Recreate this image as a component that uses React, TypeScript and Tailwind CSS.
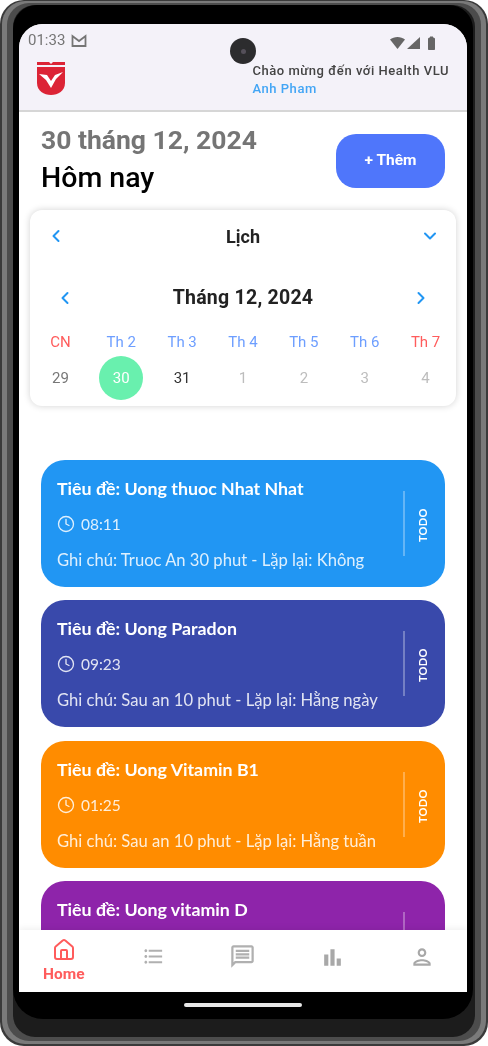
import { ChevronDown, ChevronLeft, ChevronRight, Clock, House } from "lucide-react";
import { MdBarChart, MdFormatListBulleted, MdOutlineMessage, MdOutlinePerson } from "react-icons/md";

const weekDays = [
  { label: "CN", color: "text-[#ff5c5c]" },
  { label: "Th 2", color: "text-[#6d9eff]" },
  { label: "Th 3", color: "text-[#6d9eff]" },
  { label: "Th 4", color: "text-[#6d9eff]" },
  { label: "Th 5", color: "text-[#6d9eff]" },
  { label: "Th 6", color: "text-[#6d9eff]" },
  { label: "Th 7", color: "text-[#ff5c5c]" },
];

const days = [
  { label: "29", color: "text-[#777777]" },
  { label: "30", color: "text-white", selected: true },
  { label: "31", color: "text-[#333333]" },
  { label: "1", color: "text-[#bdbdbd]" },
  { label: "2", color: "text-[#bdbdbd]" },
  { label: "3", color: "text-[#bdbdbd]" },
  { label: "4", color: "text-[#bdbdbd]" },
];

type Task = { title: string; time?: string; note?: string; color: string };

// the last card is cut by the bottom bar, only its title shows
const tasks: Task[] = [
  { title: "Uong thuoc Nhat Nhat", time: "08:11", note: "Ghi chú: Truoc An 30 phut - Lặp lại: Không", color: "bg-[#2196f3]" },
  { title: "Uong Paradon", time: "09:23", note: "Ghi chú: Sau an 10 phut - Lặp lại: Hằng ngày", color: "bg-[#3949ab]" },
  { title: "Uong Vitamin B1", time: "01:25", note: "Ghi chú: Sau an 10 phut - Lặp lại: Hằng tuần", color: "bg-[#ff8c00]" },
  { title: "Uong vitamin D", color: "bg-[#8e24aa]" },
];

function Logo() {
  return (
    <svg width="30" height="34" viewBox="0 0 30 34">
      <path d="M1 0H13L15 2L17 0H29V3H1Z" fill="#dc2436" />
      <path d="M1 5H29V21C29 29 22 33 15 33C8 33 1 29 1 21Z" fill="#dc2436" />
      <path d="M3 12L11 13L15 19L19 13L27 10L20 17L15 26L10 18Z" fill="#ffffff" />
    </svg>
  );
}

function GmailIcon() {
  return (
    <svg width="16" height="13" viewBox="0 0 16 13" fill="none" stroke="#757575" strokeWidth="1.8">
      <path d="M1.5 12V2L8 7L14.5 2V12Z" />
    </svg>
  );
}

function StatusIcons() {
  return (
    <svg width="48" height="14" viewBox="0 0 48 14" fill="#666666">
      <path d="M0 3.5C4 0 11 0 15 3.5L7.5 13Z" />
      <path d="M30 1V13H17Z" />
      <path d="M38 3C38 2 39 1.5 40 1.5V0.5H43V1.5C44 1.5 45 2 45 3V13C45 13.6 44.6 14 44 14H39C38.4 14 38 13.6 38 13Z" />
    </svg>
  );
}

function TaskCard({ title, time, note, color }: Task) {
  return (
    <div className={`flex h-[127px] shrink-0 rounded-[24px] pl-[16px] ${color} font-['Lato',sans-serif] text-white`}>
      <div className="flex min-w-0 flex-1 flex-col pt-[18px]">
        <div className="text-[17.8px] leading-[21px] font-bold whitespace-nowrap">Tiêu đề: {title}</div>
        {time && (
          <div className="mt-[15px] flex items-center gap-[6px] text-white/85">
            <Clock size={18} strokeWidth={1.8} />
            <span className="text-[15.5px] leading-[20px]">{time}</span>
          </div>
        )}
        {note && <div className="mt-[16px] text-[16.6px] leading-[20px] whitespace-nowrap text-white/85">{note}</div>}
      </div>
      <div className="mt-[31px] h-[65px] w-[2px] bg-white/30" />
      <div className="flex w-[40px] items-center justify-center pt-[3px] pr-[4px]">
        <span className="rotate-[-90deg] text-[11px] font-bold tracking-[0.3px]">TODO</span>
      </div>
    </div>
  );
}

export default function App() {
  return (
    <div className="h-[1046px] w-[488px] overflow-hidden bg-white font-['Roboto',sans-serif] blur-[0.5px]">
      {/* device frame, one layer per bezel band */}
      <div className="h-full rounded-[24px] bg-[#3a3a3a] px-[2px] pt-[1px] pb-[2px]">
        <div className="h-full rounded-[23px] bg-[#7a7a7a] px-[5px] pt-[2px] pb-[3px]">
          <div className="h-full rounded-[22px] bg-[#4c4c4c] px-[6px] pt-[2px] pb-[4px]">
            <div className="h-full rounded-[22px] bg-[#1c1c1c] pr-[2px] pb-[18px]">
              <div className="h-full rounded-t-[24px] rounded-b-[30px] bg-black px-[6px] pt-[19px]">
                <div className="relative flex h-[968px] w-[448px] flex-col overflow-hidden rounded-t-[24px] bg-white">
                  {/* status bar and app bar */}
                  <header className="h-[88px] shrink-0 border-b-2 border-[#d6d6d6] bg-[#f4f2f9]">
                    <div className="flex h-[26px] items-end justify-between pr-[29px] pl-[9px]">
                      <div className="flex items-center gap-[6px] text-[15px] leading-[20px] text-[#757575]">
                        <span>01:33</span>
                        <GmailIcon />
                      </div>
                      <StatusIcons />
                    </div>
                    <div className="flex justify-between pt-[12px] pr-[18px] pl-[17px]">
                      <Logo />
                      <div className="text-[13px] leading-[18px] font-medium tracking-[0.55px]">
                        <div className="text-[#444444]">Chào mừng đến với Health VLU</div>
                        <div className="text-[#42a5f5]">Anh Pham</div>
                      </div>
                    </div>
                  </header>

                  {/* scrolling content */}
                  <main className="min-h-0 flex-1 overflow-hidden">
                    <div className="flex items-start justify-between px-[22px]">
                      <div className="pt-[11px]">
                        <div className="text-[26.5px] leading-[33px] font-bold text-[#757575]">30 tháng 12, 2024</div>
                        <div className="mt-[4px] text-[28.5px] leading-[35px] font-medium text-black">Hôm nay</div>
                      </div>
                      <button className="mt-[22px] h-[54px] w-[109px] rounded-[20px] bg-[#4f76fb] text-[15.5px] font-bold text-white">
                        + Thêm
                      </button>
                    </div>

                    <section className="mx-[11px] mt-[15px] h-[196px] rounded-[12px] bg-white shadow-[0_0_7px_rgba(0,0,0,0.18)]">
                      <div className="flex h-[52px] items-center justify-between px-[16px] text-[#2196f3]">
                        <ChevronLeft size={20} strokeWidth={2.4} />
                        <span className="text-[18px] font-bold text-[#222222]">Lịch</span>
                        <ChevronDown size={20} strokeWidth={2.4} />
                      </div>
                      <div className="mt-[10px] flex h-[52px] items-center justify-between px-[25px] text-[#2196f3]">
                        <ChevronLeft size={20} strokeWidth={2.4} />
                        <span className="text-[19.5px] font-bold tracking-[0.25px] text-[#222222]">Tháng 12, 2024</span>
                        <ChevronRight size={20} strokeWidth={2.4} />
                      </div>
                      <div className="mt-[7px] grid grid-cols-7">
                        {weekDays.map((d) => (
                          <div key={d.label} className={`h-[22px] text-center text-[15px] leading-[22px] ${d.color}`}>
                            {d.label}
                          </div>
                        ))}
                        {days.map((d) => (
                          <div key={d.label} className={`mt-[1px] flex h-[48px] items-center justify-center text-[15px] ${d.color}`}>
                            <span className={`flex h-[44px] w-[44px] items-center justify-center rounded-full ${d.selected ? "bg-[#69f0ae]" : ""}`}>
                              {d.label}
                            </span>
                          </div>
                        ))}
                      </div>
                    </section>

                    <div className="mt-[54px] flex flex-col gap-[13.4px] px-[22px]">
                      {tasks.map((t) => (
                        <TaskCard key={t.title} {...t} />
                      ))}
                    </div>
                  </main>

                  {/* bottom navigation */}
                  <nav className="relative grid h-[62px] shrink-0 grid-cols-5 bg-white shadow-[0_-2px_6px_rgba(0,0,0,0.06)]">
                    <div className="flex flex-col items-center pt-[8px] text-[#ff5c5c]">
                      <House size={24} strokeWidth={2} />
                      <span className="mt-[2px] text-[15.5px] leading-[20px] font-bold">Home</span>
                    </div>
                    <div className="flex justify-center pt-[15px] text-[#b0b0b0]">
                      <MdFormatListBulleted size={23} />
                    </div>
                    <div className="flex justify-center pt-[13px] text-[#b0b0b0]">
                      <MdOutlineMessage size={27} />
                    </div>
                    <div className="flex justify-center pt-[15px] text-[#a8a8a8]">
                      <MdBarChart size={25} />
                    </div>
                    <div className="flex justify-center pt-[14px] text-[#a8a8a8]">
                      <MdOutlinePerson size={26} />
                    </div>
                  </nav>

                  {/* camera */}
                  <div className="absolute top-[14px] left-[211px] flex h-[26px] w-[26px] items-center justify-center rounded-full bg-[#2c2c2e]">
                    <div className="h-[5px] w-[5px] rounded-full bg-[#55505a]" />
                  </div>
                </div>
                {/* home indicator */}
                <div className="mt-[11px] flex justify-center">
                  <div className="h-[4px] w-[118px] rounded-full bg-[#e8e8e8]" />
                </div>
              </div>
            </div>
          </div>
        </div>
      </div>
    </div>
  );
}
